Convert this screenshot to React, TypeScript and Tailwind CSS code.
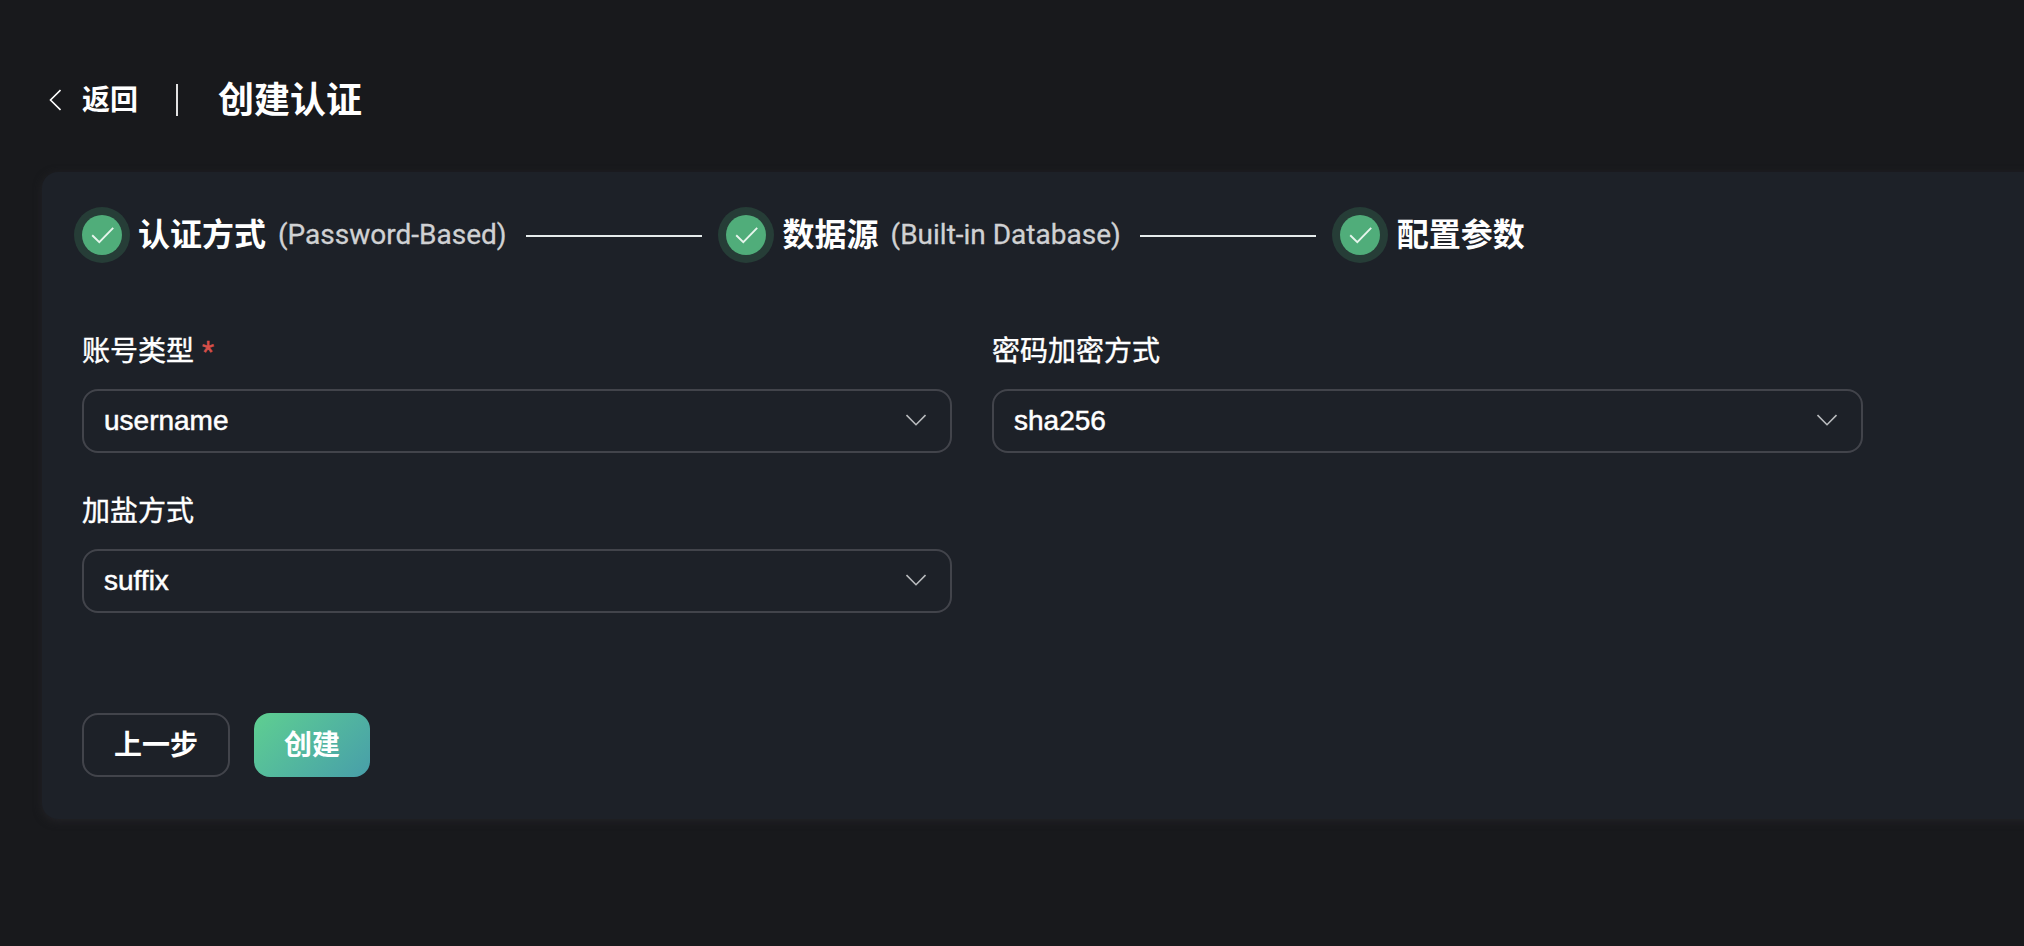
import React from "react";

function CheckBadge() {
  return (
    <span className="flex size-14 shrink-0 items-center justify-center rounded-full bg-[#263d37]">
      <span className="flex size-10 items-center justify-center rounded-full bg-[#50ad7a]">
        <svg className="size-10" viewBox="0 0 40 40" fill="none" stroke="#e6f5ec" strokeWidth="1.9">
          <path d="M10.2 20.2 17.3 27.2 31.2 12.8" />
        </svg>
      </span>
    </span>
  );
}

function Step({ title, detail, first }: { title: string; detail?: string; first?: boolean }) {
  return (
    <div className="flex items-center">
      <CheckBadge />
      <span className={`${first ? "ml-2" : "ml-[9px]"} text-[32px] leading-10 font-bold text-white`}>{title}</span>
      {detail && (
        <span className="ml-3 font-[Roboto] text-[28px] leading-10 text-[#d0d1d3] [-webkit-text-stroke:0.3px]">
          {detail}
        </span>
      )}
    </div>
  );
}

function Connector() {
  return <div className="mt-0.5 mr-4 ml-[19px] h-0.5 w-44 bg-[#e6ecec]" />;
}

function Field({ label, value, required }: { label: string; value: string; required?: boolean }) {
  return (
    <div>
      <label className="flex h-10 items-center text-[28px] text-white [-webkit-text-stroke:0.4px]">
        {label}
        {required && <span className="ml-2 font-[Roboto] text-[#d64f49]">*</span>}
      </label>
      <button className="mt-[17px] flex h-16 w-full items-center justify-between rounded-2xl border-2 border-[#42444b] pr-6 pl-5 text-[28px] text-white [-webkit-text-stroke:0.5px]">
        <span>{value}</span>
        <svg className="mb-0.5 h-3 w-5" viewBox="0 0 20 12" fill="none" stroke="#b9bbbe" strokeWidth="1.6">
          <path d="M.5 1 10 10.7 19.5 1" />
        </svg>
      </button>
    </div>
  );
}

export default function App() {
  return (
    <div className="h-[946px] w-full overflow-hidden bg-[#18191c] pt-[76px] pl-[42px] font-['Liberation_Sans','Noto_Sans_CJK_SC',sans-serif]">
      <header className="flex h-12 items-center text-white">
        <button className="flex items-center pl-[6px]">
          <svg className="ml-px h-6 w-3" viewBox="0 0 12 24" fill="none" stroke="currentColor" strokeWidth="1.6">
            <path d="M11.5 2 1.5 12 11.5 22" />
          </svg>
          <span className="ml-[21px] pt-0.5 text-[28px] leading-10 font-bold">返回</span>
        </button>
        <span className="ml-[38px] h-8 w-0.5 bg-[#e1e1e2]" />
        <h1 className="ml-10 pt-0.5 text-[36px] leading-12 font-bold">创建认证</h1>
      </header>

      <main className="mt-12 h-[647px] w-[2100px] rounded-2xl bg-[#1d2128] px-10 pt-[35px] shadow-[0_2px_8px_#232327]">
        <div className="-ml-2 flex items-center">
          <Step title="认证方式" detail="(Password-Based)" first />
          <Connector />
          <Step title="数据源" detail="(Built-in Database)" />
          <Connector />
          <Step title="配置参数" />
        </div>

        <div className="mt-[69px] grid grid-cols-[870px_871px] gap-x-10 gap-y-[39px]">
          <Field label="账号类型" value="username" required />
          <Field label="密码加密方式" value="sha256" />
          <Field label="加盐方式" value="suffix" />
        </div>

        <div className="mt-[100px] flex gap-6 text-[28px] font-bold text-white">
          <button className="h-16 w-[148px] rounded-2xl border-2 border-[#42444b] pt-0.5">上一步</button>
          <button className="h-16 w-[116px] rounded-2xl bg-linear-135 from-[#5fcf90] to-[#489ea9] pt-0.5">创建</button>
        </div>
      </main>
    </div>
  );
}
